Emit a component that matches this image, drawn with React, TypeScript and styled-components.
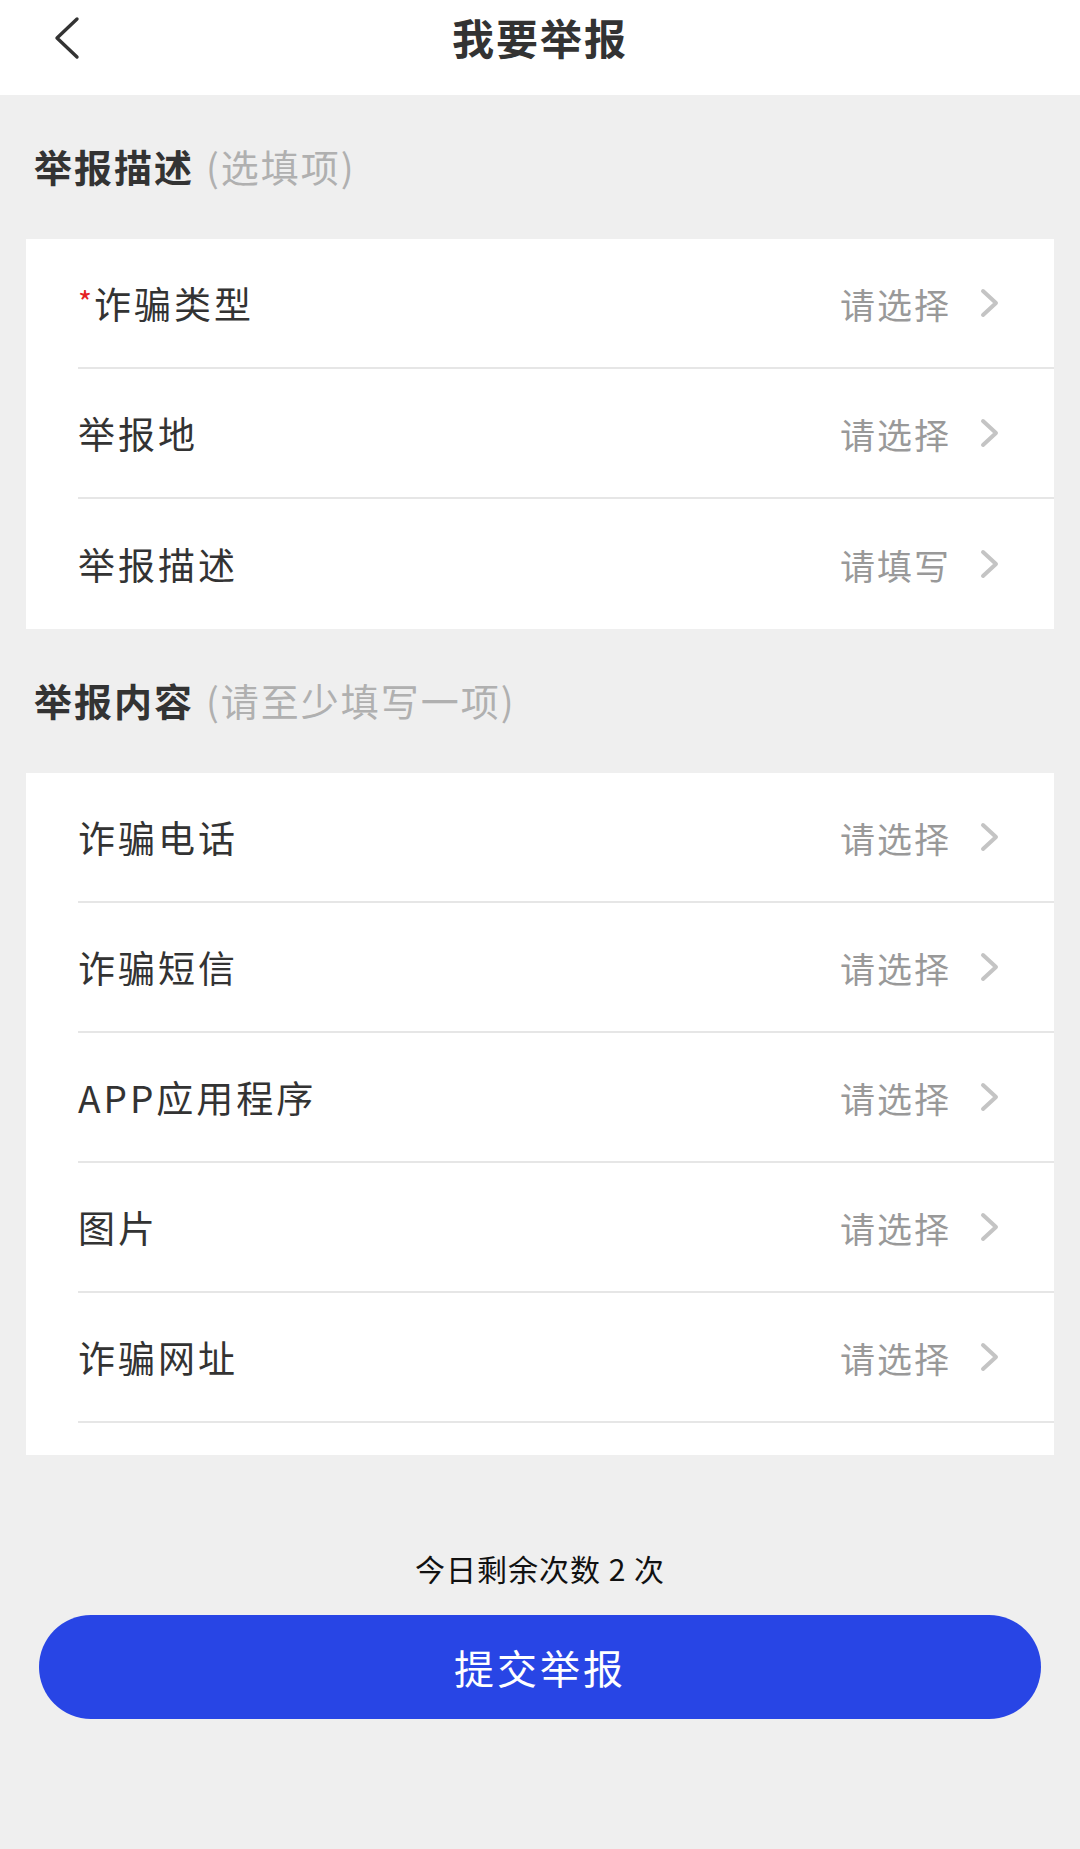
import React from "react";
import styled, { createGlobalStyle } from "styled-components";

const GlobalStyle = createGlobalStyle`
  html, body {
    margin: 0;
    padding: 0;
    background: #efefef;
  }
  body {
    font-family: "Noto Sans CJK SC", "Noto Sans", sans-serif;
    -webkit-font-smoothing: antialiased;
  }
  * { box-sizing: border-box; }
`;

const Page = styled.div`
  width: 1080px;
  min-height: 1849px;
  background: #efefef;
  display: flex;
  flex-direction: column;
`;

const Header = styled.header`
  height: 95px;
  background: #ffffff;
  display: grid;
  grid-template-columns: 1fr auto 1fr;
  align-items: start;
  padding-top: 12px;
`;

const BackButton = styled.button`
  justify-self: start;
  margin-left: 48px;
  margin-top: 4px;
  padding: 0;
  border: none;
  background: transparent;
  width: 36px;
  height: 44px;
  display: flex;
  align-items: center;
  justify-content: center;
`;

const Title = styled.h1`
  margin: 0;
  font-size: 42px;
  line-height: 50px;
  font-weight: 700;
  color: #333333;
  letter-spacing: 2px;
`;

const SectionHeader = styled.div`
  height: 144px;
  display: flex;
  align-items: center;
  padding-left: 34px;
  padding-bottom: 4px;
  gap: 12px;
`;

const SectionTitle = styled.span`
  font-size: 38px;
  font-weight: 700;
  color: #333333;
  letter-spacing: 2px;
`;

const SectionHint = styled.span`
  font-size: 38px;
  font-weight: 400;
  color: #b0b0b0;
  letter-spacing: 2px;
`;

const Card = styled.div<{ $tail?: boolean }>`
  margin: 0 26px;
  background: #ffffff;
  padding-bottom: ${(p) => (p.$tail ? "32px" : "0")};
`;

const Row = styled.div<{ $divider: boolean }>`
  height: 130px;
  margin-left: 52px;
  padding-right: 53px;
  display: flex;
  align-items: center;
  border-bottom: ${(p) => (p.$divider ? "2px solid #e6e6e6" : "none")};
`;

const Label = styled.span`
  flex: 1;
  font-size: 37px;
  color: #333333;
  letter-spacing: 3px;
  display: flex;
  align-items: center;
`;

const Required = styled.span`
  color: #e52222;
  font-size: 30px;
  margin-right: 2px;
  margin-top: -4px;
  letter-spacing: 0;
`;

const Value = styled.span`
  font-size: 35px;
  color: #999999;
  letter-spacing: 2px;
  margin-right: 28px;
`;

const Chevron = styled.svg`
  width: 22px;
  height: 30px;
  display: block;
`;

const Footer = styled.div`
  display: flex;
  flex-direction: column;
  align-items: center;
  padding-top: 93px;
`;

const Remaining = styled.div`
  font-size: 30px;
  line-height: 40px;
  color: #111111;
  letter-spacing: 1px;
`;

const SubmitButton = styled.button`
  margin-top: 27px;
  width: 1002px;
  height: 104px;
  border: none;
  border-radius: 52px;
  background: #2845e5;
  color: #ffffff;
  font-family: "Noto Sans CJK SC", "Noto Sans", sans-serif;
  font-size: 40px;
  letter-spacing: 3px;
  display: flex;
  align-items: center;
  justify-content: center;
`;

const ArrowRight = () => (
  <Chevron viewBox="0 0 22 30">
    <polyline
      points="4,3 17,15 4,27"
      fill="none"
      stroke="#c4c4c4"
      strokeWidth="4"
      strokeLinecap="round"
      strokeLinejoin="round"
    />
  </Chevron>
);

type Item = { label: string; value: string; required?: boolean };

const describeItems: Item[] = [
  { label: "诈骗类型", value: "请选择", required: true },
  { label: "举报地", value: "请选择" },
  { label: "举报描述", value: "请填写" },
];

const contentItems: Item[] = [
  { label: "诈骗电话", value: "请选择" },
  { label: "诈骗短信", value: "请选择" },
  { label: "APP应用程序", value: "请选择" },
  { label: "图片", value: "请选择" },
  { label: "诈骗网址", value: "请选择" },
];

const FormRow = ({ item, divider }: { item: Item; divider: boolean }) => (
  <Row $divider={divider}>
    <Label>
      {item.required && <Required>*</Required>}
      {item.label}
    </Label>
    <Value>{item.value}</Value>
    <ArrowRight />
  </Row>
);

export default function App() {
  return (
    <Page>
      <GlobalStyle />
      <Header>
        <BackButton aria-label="返回">
          <svg width="30" height="44" viewBox="0 0 30 44">
            <polyline
              points="26,3 6,22 26,41"
              fill="none"
              stroke="#333333"
              strokeWidth="3.4"
              strokeLinecap="round"
              strokeLinejoin="round"
            />
          </svg>
        </BackButton>
        <Title>我要举报</Title>
        <div />
      </Header>

      <SectionHeader>
        <SectionTitle>举报描述</SectionTitle>
        <SectionHint>(选填项)</SectionHint>
      </SectionHeader>
      <Card>
        {describeItems.map((it, i) => (
          <FormRow key={it.label} item={it} divider={i < describeItems.length - 1} />
        ))}
      </Card>

      <SectionHeader>
        <SectionTitle>举报内容</SectionTitle>
        <SectionHint>(请至少填写一项)</SectionHint>
      </SectionHeader>
      <Card $tail>
        {contentItems.map((it) => (
          <FormRow key={it.label} item={it} divider />
        ))}
      </Card>

      <Footer>
        <Remaining>今日剩余次数 2 次</Remaining>
        <SubmitButton>提交举报</SubmitButton>
      </Footer>
    </Page>
  );
}
